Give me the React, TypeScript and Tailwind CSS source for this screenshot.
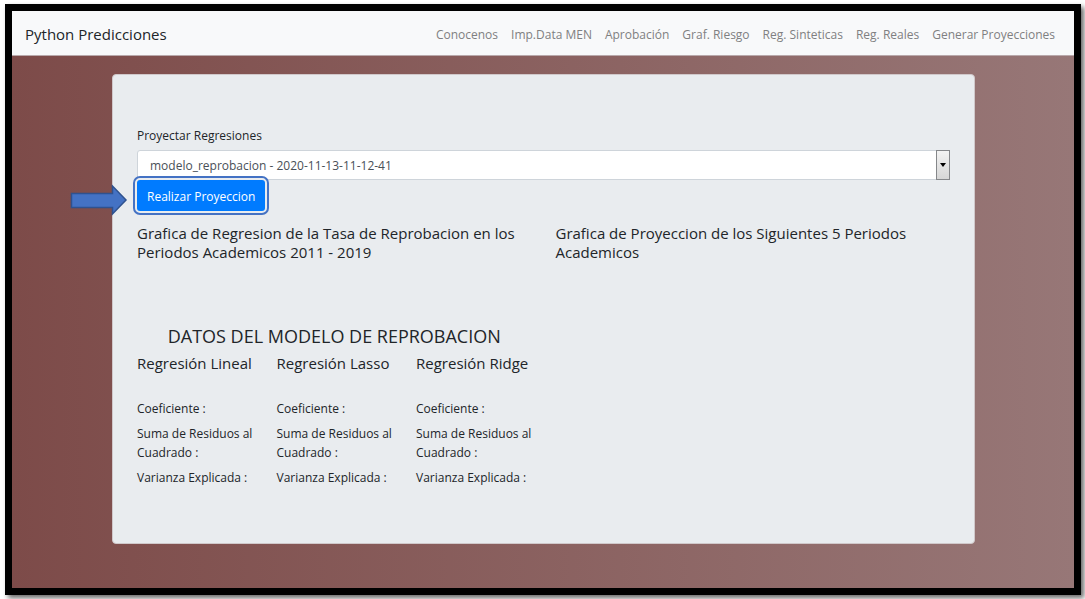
const links = [
  "Conocenos",
  "Imp.Data MEN",
  "Aprobación",
  "Graf. Riesgo",
  "Reg. Sinteticas",
  "Reg. Reales",
  "Generar Proyecciones",
];

const regressions = ["Regresión Lineal", "Regresión Lasso", "Regresión Ridge"];

function Navbar() {
  return (
    <nav className="flex h-[45px] items-center justify-between border-b border-[#b9a9ab] bg-[#f8f9fa] pt-[3px] pr-[19px] pl-[13px]">
      <a href="#inicio" className="text-[15px] whitespace-nowrap text-[#212529]">
        Python Predicciones
      </a>
      <ul className="flex gap-[13px] text-[12px] whitespace-nowrap text-[#7f8081]">
        {links.map((link) => (
          <li key={link}>
            <a href="#seccion">{link}</a>
          </li>
        ))}
      </ul>
    </nav>
  );
}

function PointerArrow() {
  return (
    <svg
      className="absolute top-1 right-full mr-[9px] h-8 w-[58px]"
      viewBox="0 0 58 32"
      aria-hidden="true"
    >
      <path
        d="M1.5 9.5H42.5V2L56 16L42.5 30V23.5H1.5Z"
        fill="#4472c4"
        stroke="#2f528f"
        strokeWidth="1.5"
      />
    </svg>
  );
}

function ProjectionForm() {
  return (
    <form onSubmit={(e) => e.preventDefault()}>
      <label htmlFor="modelo" className="mb-[5px] block">
        Proyectar Regresiones
      </label>
      <div className="relative">
        <select
          id="modelo"
          className="block h-[30px] w-full appearance-none rounded-[3px] border border-[#ced4da] bg-white px-3 pt-px text-[12px] text-[#495057]"
        >
          <option>modelo_reprobacion - 2020-11-13-11-12-41</option>
        </select>
        <span className="pointer-events-none absolute inset-y-0 right-0 flex w-[14px] items-center justify-center border border-[#85878a] bg-linear-to-b from-[#f3f3f3] to-[#d6d6d6]">
          <svg className="h-1 w-[6px]" viewBox="0 0 6 4" aria-hidden="true">
            <path d="M0 0H6L3 4Z" fill="#000" />
          </svg>
        </span>
      </div>
      <div className="relative w-fit">
        <button
          type="submit"
          className="block h-[31px] rounded-[3px] bg-[#007bff] px-[10px] pt-px text-[12px] whitespace-nowrap text-white outline-2 outline-offset-2 outline-[#4472c4] ring-2 ring-[#e9ecef]"
        >
          Realizar Proyeccion
        </button>
        <PointerArrow />
      </div>
    </form>
  );
}

export default function App() {
  return (
    <div className="flex min-h-screen bg-white pt-1 pr-1 pb-1 pl-[5px] font-['Open_Sans','Noto_Sans',sans-serif] text-[12px] leading-[19px] text-[#212529]">
      <div className="flex grow flex-col border-[7px] border-black bg-linear-to-r from-[#7d4b49] to-[#977777] shadow-[3px_3px_5px_rgba(0,0,0,0.6)]">
        <Navbar />
        <main className="mr-[99px] mb-11 ml-[100px] mt-[18px] rounded border border-[#d0c8ca] bg-[#e9ecef] px-6 pt-[51px] pb-14">
          <ProjectionForm />
          <div className="mt-[13px] grid grid-cols-2 gap-6 text-[15px]">
            <h5>
              Grafica de Regresion de la Tasa de Reprobacion en los Periodos
              Academicos 2011 - 2019
            </h5>
            <h5>Grafica de Proyeccion de los Siguientes 5 Periodos Academicos</h5>
          </div>
          <div className="mt-[62px] grid grid-cols-2 gap-6">
            <section>
              <h4 className="mb-[6px] text-center text-[18px] leading-6 whitespace-nowrap">
                DATOS DEL MODELO DE REPROBACION
              </h4>
              <div className="-mr-4 grid grid-cols-3 gap-2">
                {regressions.map((name) => (
                  <div key={name}>
                    <h5 className="mb-[26px] text-[15px] whitespace-nowrap">{name}</h5>
                    <p className="mb-[6px]">Coeficiente :</p>
                    <p className="mb-[6px]">Suma de Residuos al Cuadrado :</p>
                    <p className="whitespace-nowrap">Varianza Explicada :</p>
                  </div>
                ))}
              </div>
            </section>
          </div>
        </main>
      </div>
    </div>
  );
}
